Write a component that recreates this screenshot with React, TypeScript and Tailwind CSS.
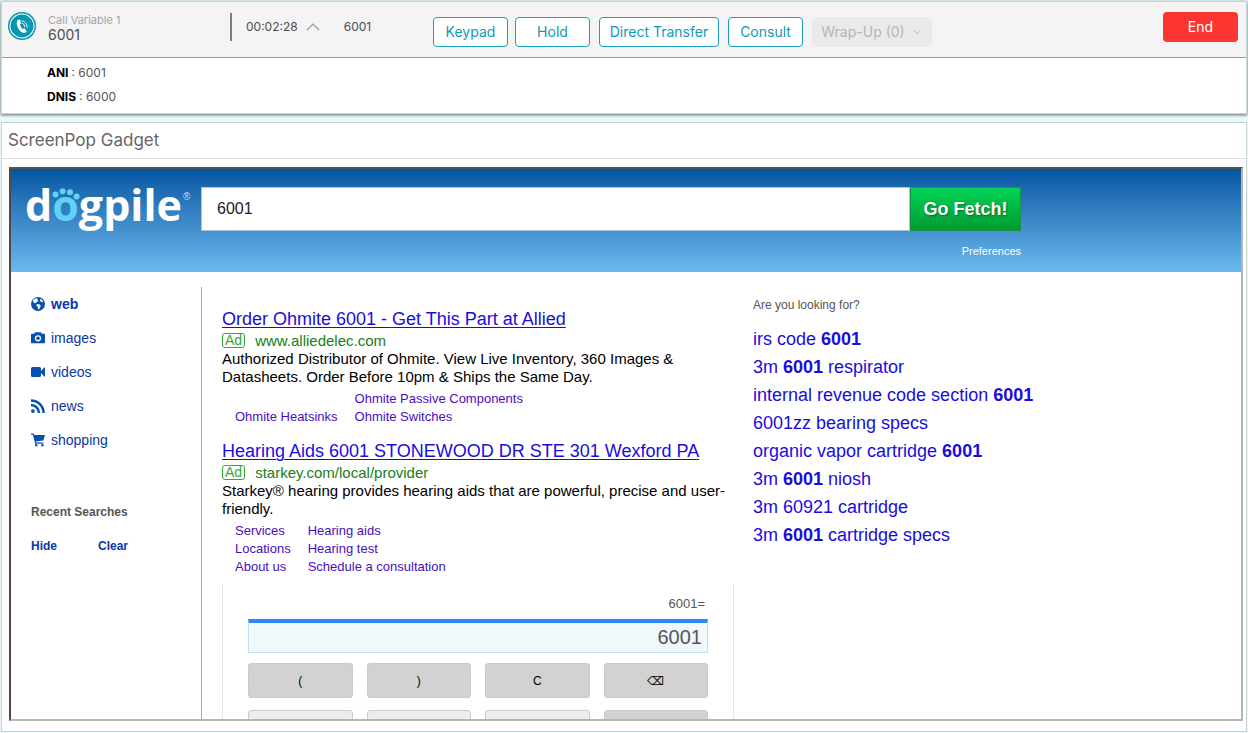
import React from "react";
import { ChevronDown } from "lucide-react";

const actionButton =
  "h-[30px] rounded border border-[#17a0bd] bg-white font-[Inter,sans-serif] text-sm text-[#0f9ab5]";

function PhoneBadge() {
  return (
    <svg viewBox="0 0 28 28" className="size-7 shrink-0" aria-hidden="true">
      <circle cx="14" cy="14" r="14" fill="#0697b3" />
      <circle cx="14" cy="14" r="12" fill="none" stroke="#fff" strokeWidth="1.1" />
      <path
        d="M9.4 8.2 L11.4 7.4 Q11.9 7.3 12.1 7.8 L13.2 10.9 Q13.3 11.4 12.9 11.7 L11.9 12.5 Q12.6 15 14.6 17 L15.9 16.4 Q16.4 16.2 16.7 16.6 L18.5 18.9 Q18.8 19.3 18.4 19.7 L17.2 20.9 Q12.3 20.8 10 15.9 Q8 11.3 9.4 8.2Z"
        fill="#fff"
      />
      <path d="M14 8.8 Q18.8 9.8 19.2 15.4 M14.3 11.2 Q16.7 12 16.9 14.8" fill="none" stroke="#fff" strokeWidth="0.9" strokeLinecap="round" />
    </svg>
  );
}

function CallBar() {
  return (
    <section className="mx-px border border-[#c5d5d8] bg-white shadow-[0_1px_3px_#5c6a6a]">
      <header className="flex h-14 items-start border-b border-[#2fd39a] bg-[#f4f4f4] pr-2 pl-1.5 font-[Inter,sans-serif] text-[#4d4d4d]">
        <div className="flex w-[222px] shrink-0 gap-3 pt-[10px]">
          <PhoneBadge />
          <div>
            <div className="text-[11px] leading-4 text-[#a5a5a5]">Call Variable 1</div>
            <div className="text-sm leading-[14px]">6001</div>
          </div>
        </div>
        <div className="mt-[11px] flex h-7 w-[203px] shrink-0 items-center border-l-2 border-[#7d7d7d] pl-[14px] text-xs">
          <span>00:02:28</span>
          <button aria-label="Collapse call details" className="ml-2">
            <svg viewBox="0 0 14 8" className="h-2 w-[14px]" fill="none" stroke="#999" strokeWidth="1.2" aria-hidden="true">
              <path d="M1 7 L7 1 L13 7" />
            </svg>
          </button>
          <span className="ml-6">6001</span>
        </div>
        <div className="flex flex-1 gap-[9px] pt-[15px]">
          <div className="flex gap-[7px]">
            <button className={`${actionButton} w-[75px]`}>Keypad</button>
            <button className={`${actionButton} w-[75px]`}>Hold</button>
          </div>
          <button className={`${actionButton} w-[120px]`}>Direct Transfer</button>
          <button className={`${actionButton} w-[75px]`}>Consult</button>
          <button disabled className="flex h-[30px] w-[120px] items-center justify-center gap-1.5 rounded bg-[#eaeaea] text-sm text-[#b5b5b5]">
            Wrap-Up (0) <ChevronDown size={12} />
          </button>
        </div>
        <button className="mt-[10px] h-[30px] w-[75px] rounded bg-[#fb3631] text-sm text-white">End</button>
      </header>
      <dl className="flex h-[55px] flex-col pt-[3px] pl-[45px] font-[Inter,sans-serif] text-xs leading-6 text-[#555]">
        <div className="flex gap-[3px]">
          <dt className="font-bold text-black">ANI</dt>
          <dd>: 6001</dd>
        </div>
        <div className="flex gap-[3px]">
          <dt className="font-bold text-black">DNIS</dt>
          <dd>: 6000</dd>
        </div>
      </dl>
    </section>
  );
}

function Logo() {
  return (
    <a href="#home" aria-label="dogpile home" className="mt-[14px] ml-[14px] block h-12 w-44 shrink-0">
      <svg viewBox="0 0 176 48" className="h-12 w-44 overflow-visible" aria-hidden="true">
        <text x="0" y="38" fontFamily="Open Sans, sans-serif" fontWeight="700" fontSize="43" fill="#fff">
          d<tspan fill="#5fd3f5">o</tspan>gpile
        </text>
        <g fill="#5fd3f5">
          <circle cx="30.5" cy="11.5" r="3" />
          <circle cx="37.6" cy="8.3" r="3" />
          <circle cx="45" cy="9.2" r="3" />
          <circle cx="51.6" cy="13.4" r="3" />
        </g>
        <text x="158" y="17" fontFamily="Liberation Sans, sans-serif" fontSize="10" fill="#c5dcef">®</text>
      </svg>
    </a>
  );
}

function SearchHeader() {
  return (
    <header className="flex h-[103px] shrink-0 bg-linear-to-b from-[#0057a2] to-[#6cb9ed]">
      <Logo />
      <form className="mt-[18px] w-[820px]" onSubmit={(e) => e.preventDefault()}>
        <div className="flex h-11">
          <input
            aria-label="Search"
            defaultValue="6001"
            className="min-w-0 flex-1 border border-[#a9c3dd] bg-white px-[15px] text-base text-[#222] outline-none"
          />
          <button className="w-[111px] border border-[#159447] bg-linear-to-b from-[#00d457] to-[#009b31] text-lg font-bold text-white [text-shadow:1px_1px_2px_#0006]">
            Go Fetch!
          </button>
        </div>
        <div className="pt-[11px] text-right text-[11px] leading-[18px]">
          <a href="#preferences" className="text-white">Preferences</a>
        </div>
      </form>
    </header>
  );
}

const iconClass = "size-[14px] shrink-0 text-[#0751ae]";

function EarthIcon() {
  return (
    <svg viewBox="0 0 14 14" className={iconClass} aria-hidden="true">
      <circle cx="7" cy="7" r="7" fill="currentColor" />
      <path d="M2.6 2.6 L4.8 1.2 L6.6 1.2 L6.2 2.5 L7.6 3.4 L6.4 4.4 L5.6 5.6 L4.6 5.4 L4 6.4 L2.6 5.2 L1.8 4Z" fill="#fff" />
      <path d="M5.8 6.9 L8.2 7.2 L9.9 8.7 L9 10.4 L7.8 12.6 L7 12.2 L6.9 10.2 L5.4 8.6Z" fill="#fff" />
      <path d="M9.4 1.8 L11 2.7 L12.2 4.4 L11.2 5.2 L10 4.8 L9 3.4Z" fill="#fff" />
    </svg>
  );
}

function CameraIcon() {
  return (
    <svg viewBox="0 0 14 14" className={iconClass} fill="currentColor" aria-hidden="true">
      <path d="M0 3.6 Q0 2.8 0.8 2.8 H3 L4.3 1.3 H9.7 L11 2.8 H13.2 Q14 2.8 14 3.6 V11.4 Q14 12.2 13.2 12.2 H0.8 Q0 12.2 0 11.4Z" />
      <circle cx="7" cy="7.3" r="3.1" fill="#fff" />
      <circle cx="7" cy="7.3" r="1.8" />
    </svg>
  );
}

function VideoIcon() {
  return (
    <svg viewBox="0 0 14 14" className={iconClass} fill="currentColor" aria-hidden="true">
      <rect x="0" y="2" width="10" height="10" rx="1.6" />
      <path d="M10 6 L13.2 2.4 H14 V11.6 H13.2 L10 8Z" />
    </svg>
  );
}

function FeedIcon() {
  return (
    <svg viewBox="0 0 14 14" className={iconClass} fill="none" stroke="currentColor" strokeWidth="2.5" aria-hidden="true">
      <circle cx="1.9" cy="12.1" r="1.9" fill="currentColor" stroke="none" />
      <path d="M0 6 A8 8 0 0 1 8 14 M0 1.4 A12.6 12.6 0 0 1 12.6 14" />
    </svg>
  );
}

function CartIcon() {
  return (
    <svg viewBox="0 0 14 14" className={iconClass} fill="currentColor" aria-hidden="true">
      <path d="M0 0.6 H2.8 L3.3 2 H14 L12.4 7.6 L4.9 8.4 L5.2 9.6 H12.4 V10.8 H4.2 L1.9 1.8 H0Z" />
      <circle cx="5.2" cy="12.2" r="1.2" />
      <circle cx="11.4" cy="12.2" r="1.2" />
    </svg>
  );
}

const categories = [
  { name: "web", icon: <EarthIcon /> },
  { name: "images", icon: <CameraIcon /> },
  { name: "videos", icon: <VideoIcon /> },
  { name: "news", icon: <FeedIcon /> },
  { name: "shopping", icon: <CartIcon /> },
];

function Sidebar() {
  return (
    <aside className="mt-[15px] w-[191px] shrink-0 border-r border-[#aaa] pl-5 text-[#0a37a6]">
      <nav>
        {categories.map(({ name, icon }, i) => (
          <a key={name} href={`#${name}`} className={`flex h-[34px] items-center gap-1.5 text-sm ${i === 0 ? "font-bold" : ""}`}>
            {icon}
            {name}
          </a>
        ))}
      </nav>
      <h2 className="mt-[45px] text-xs leading-5 font-bold text-[#555]">Recent Searches</h2>
      <div className="mt-[14px] flex gap-[41px] text-xs leading-5 font-bold">
        <button>Hide</button>
        <button>Clear</button>
      </div>
    </aside>
  );
}

type AdProps = { title: string; url: string; text: string; children: React.ReactNode };

function Ad({ title, url, text, children }: AdProps) {
  return (
    <article>
      <h3 className="text-lg leading-6">
        <a href="#ad" className="text-[#1a0ddb] underline decoration-1 underline-offset-2">{title}</a>
      </h3>
      <div className="flex items-center gap-2.5 text-[15px] leading-[19px] text-[#158015]">
        <span className="rounded-[3px] border border-[#36a832] px-0.5 text-sm leading-[13px] text-[#36a832]">Ad</span>
        <a href="#ad">{url}</a>
      </div>
      <p className="text-[15px] leading-[18px] text-black">{text}</p>
      <div className="mt-1 grid w-fit grid-cols-[auto_auto] items-end gap-x-[17px] pl-[13px] text-[13px] leading-[18px] text-[#4a0dbd]">
        {children}
      </div>
    </article>
  );
}

function Key({ name, label = "", light = false }: { name: string; label?: string; light?: boolean }) {
  return (
    <button
      aria-label={name}
      className={`h-[35px] rounded-[3px] border border-[#cacaca] text-xs text-black ${light ? "bg-[#ededed]" : "bg-[#d2d2d2]"}`}
    >
      {label}
    </button>
  );
}

function Calculator() {
  return (
    <div className="mt-2 w-[512px] border-x border-[#e8e8e8] px-[25px] pt-2.5">
      <div className="pr-[3px] text-right text-[13px] leading-5 text-[#555]">6001=</div>
      <input
        aria-label="Result"
        defaultValue="6001"
        className="mt-[5px] block h-[34px] w-full border border-t-4 border-[#c1dff3] border-t-[#2f86f8] bg-[#f1f8fc] px-[5px] text-right text-xl text-[#555] outline-none"
      />
      <div className="mt-2.5 grid grid-cols-4 gap-x-[14px] gap-y-3">
        <Key name="Open bracket" label="(" />
        <Key name="Close bracket" label=")" />
        <Key name="Clear" label="C" />
        <Key name="Backspace" label="⌫" />
        <Key name="Seven" light />
        <Key name="Eight" light />
        <Key name="Nine" light />
        <Key name="Divide" />
      </div>
    </div>
  );
}

const suggestions = [
  <>irs code <b>6001</b></>,
  <>3m <b>6001</b> respirator</>,
  <>internal revenue code section <b>6001</b></>,
  <>6001zz bearing specs</>,
  <>organic vapor cartridge <b>6001</b></>,
  <>3m <b>6001</b> niosh</>,
  <>3m 60921 cartridge</>,
  <>3m <b>6001</b> cartridge specs</>,
];

export default function App() {
  return (
    <div className="flex h-screen flex-col gap-2 overflow-hidden bg-[#e9f9fb] pt-px font-['Liberation_Sans',Arial,sans-serif]">
      <CallBar />
      <section className="mx-px mb-px flex min-h-0 flex-1 flex-col border border-[#c3d3d6] bg-white">
        <h1 className="h-9 shrink-0 border-b border-[#ddd] px-1.5 font-[Inter,sans-serif] text-[17px] leading-[34px] text-[#666]">ScreenPop Gadget</h1>
        <div className="mt-2 mr-[3px] mb-2.5 ml-[7px] flex min-h-0 flex-1 flex-col overflow-hidden border-2 border-t-[#555] border-r-[#b5b5b5] border-b-[#b5b5b5] border-l-[#4a4a4a]">
          <SearchHeader />
          <div className="flex min-h-0 flex-1">
            <Sidebar />
            <main className="w-[532px] shrink-0 pt-[35px] pl-5">
              <div className="flex flex-col gap-[13px]">
                <Ad
                  title="Order Ohmite 6001 - Get This Part at Allied"
                  url="www.alliedelec.com"
                  text="Authorized Distributor of Ohmite. View Live Inventory, 360 Images & Datasheets. Order Before 10pm & Ships the Same Day."
                >
                  <a href="#heatsinks">Ohmite Heatsinks</a>
                  <div className="flex flex-col">
                    <a href="#passive">Ohmite Passive Components</a>
                    <a href="#switches">Ohmite Switches</a>
                  </div>
                </Ad>
                <Ad
                  title="Hearing Aids 6001 STONEWOOD DR STE 301 Wexford PA"
                  url="starkey.com/local/provider"
                  text="Starkey® hearing provides hearing aids that are powerful, precise and user-friendly."
                >
                  <a href="#services">Services</a>
                  <a href="#aids">Hearing aids</a>
                  <a href="#locations">Locations</a>
                  <a href="#test">Hearing test</a>
                  <a href="#about">About us</a>
                  <a href="#consultation">Schedule a consultation</a>
                </Ad>
              </div>
              <Calculator />
            </main>
            <aside className="pt-6 pl-[19px] text-[#1a0ddb]">
              <h2 className="text-xs leading-[18px] text-[#555]">Are you looking for?</h2>
              <ul className="mt-[11px] text-lg leading-7">
                {suggestions.map((s, i) => (
                  <li key={i}><a href="#suggestion">{s}</a></li>
                ))}
              </ul>
            </aside>
          </div>
        </div>
      </section>
    </div>
  );
}
